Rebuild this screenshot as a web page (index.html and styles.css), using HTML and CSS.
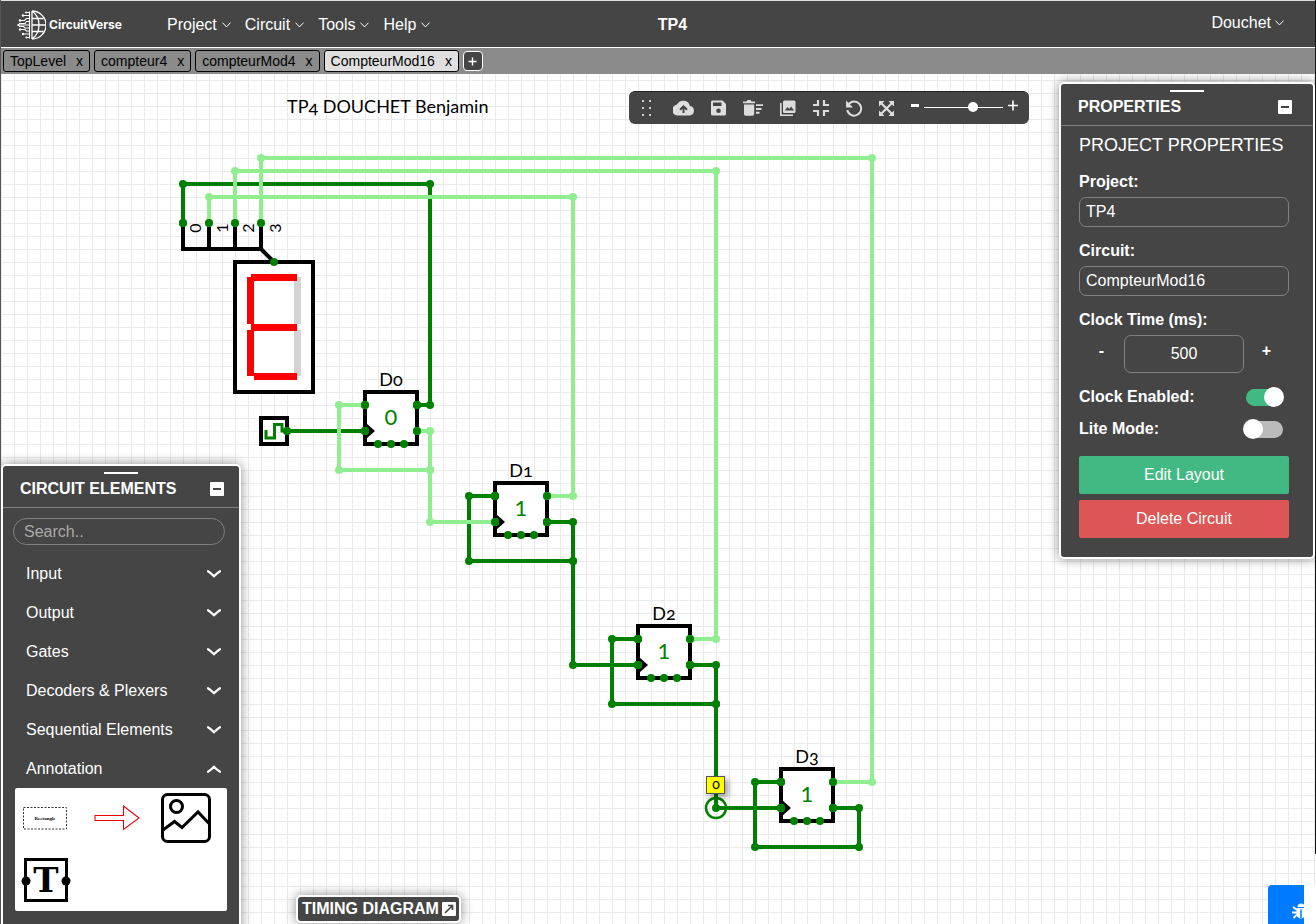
FILE: index.html
```html
<!DOCTYPE html>
<html lang="en">
<head>
<meta charset="utf-8">
<title>CircuitVerse - TP4</title>
<link rel="stylesheet" href="styles.css">
</head>
<body>
<svg class="defs" aria-hidden="true">
  <symbol id="chev-thin" viewBox="0 0 9 6"><path d="M0.5 0.7 4.5 4.9 8.5 0.7" fill="none" stroke="currentColor" stroke-width="1"/></symbol>
  <symbol id="chev" viewBox="0 0 14 8"><path d="M1 1.2Q4 3 7 6.2 10 3 13 1.2" fill="none" stroke="currentColor" stroke-width="2.2" stroke-linecap="round"/></symbol>
</svg>
<div class="app">
  <header class="topbar">
    <div class="topbar-left">
      <a class="brand" href="#">
        <svg width="29" height="30" viewBox="0 0 29 30" fill="none" stroke="#fff" stroke-width="1.3">
          <path d="M15 1v28M15 1a14 14 0 0 1 0 28M15 1q7 5 7 14t-7 14M15 8.500h11.500M15 15h13.500M15 21.500h11.500"/>
          <path d="M12.500 1.500v27M12.500 2.500H9.500M12.500 5.500H7M12.500 8.500h-3l-2 2H3.500M12.500 11.500H9.500l-1.500 2H2M12.500 15H1M12.500 18H8l-1.500-1.500H2M12.500 21H9.500l-1.500-1.500H3M12.500 24H7M12.500 27.500H10" stroke-width="1.1"/>
          <g fill="#fff" stroke="none"><circle cx="9" cy="2.500" r="1"/><circle cx="6" cy="5.500" r="1.200"/><circle cx="3" cy="10.500" r="1.200"/><circle cx="1.500" cy="15" r="1.200"/><circle cx="3" cy="19.500" r="1.200"/><circle cx="6" cy="24" r="1.200"/><circle cx="9.500" cy="27.500" r="1"/></g>
        </svg>
        <span>CircuitVerse</span>
      </a>
      <nav class="menu">
        <button>Project <svg width="9" height="6"><use href="#chev-thin"/></svg></button>
        <button>Circuit <svg width="9" height="6"><use href="#chev-thin"/></svg></button>
        <button>Tools <svg width="9" height="6"><use href="#chev-thin"/></svg></button>
        <button>Help <svg width="9" height="6"><use href="#chev-thin"/></svg></button>
      </nav>
    </div>
    <h1 class="project-name">TP4</h1>
    <button class="user">Douchet <svg width="9" height="6"><use href="#chev-thin"/></svg></button>
  </header>

  <nav class="tabs">
    <div class="tab"><a href="#">TopLevel</a><button>x</button></div>
    <div class="tab"><a href="#">compteur4</a><button>x</button></div>
    <div class="tab"><a href="#">compteurMod4</a><button>x</button></div>
    <div class="tab current"><a href="#">CompteurMod16</a><button>x</button></div>
    <button class="tab-add" aria-label="Add circuit"><svg width="9" height="9" viewBox="0 0 9 9"><path d="M4.500 0.500v8M0.500 4.500h8" stroke="#fff" stroke-width="1.400"/></svg></button>
  </nav>

  <main class="workspace">
    <svg class="canvas">
      <defs>
        <pattern id="grid" width="13" height="13" patternUnits="userSpaceOnUse" x="14" y="80"><path d="M0.500 0v13M0 0.500h13" stroke="#eaeaea" stroke-width="1" fill="none"/></pattern>
        <g id="dff">
          <rect x="0" y="0" width="52" height="52" fill="#fff" stroke="#000" stroke-width="4"/>
          <path d="M1 31 10 39 1 47z" fill="#000"/>
          <g fill="green"><circle cy="13" r="4"/><circle cy="39" r="4"/><circle cx="52" cy="13" r="4"/><circle cx="52" cy="39" r="4"/><circle cx="13" cy="52" r="4"/><circle cx="26" cy="52" r="4"/><circle cx="39" cy="52" r="4"/></g>
        </g>
        <marker id="node-d" markerUnits="userSpaceOnUse" markerWidth="8" markerHeight="8" refX="4" refY="4"><circle cx="4" cy="4" r="4" fill="green"/></marker>
        <marker id="node-l" markerUnits="userSpaceOnUse" markerWidth="8" markerHeight="8" refX="4" refY="4"><circle cx="4" cy="4" r="4" fill="#90ee90"/></marker>
        <filter id="soft" x="-50%" y="-50%" width="220%" height="220%"><feDropShadow dx="3" dy="3" stdDeviation="3" flood-opacity="0.4"/></filter>
      </defs>
      <g transform="translate(0 -74)">
        <rect y="74" width="100%" height="100%" fill="url(#grid)"/>
        <g class="parts">
          <path d="M183 223v26H261V223M209 223v26M235 223v26M261 249l13 13"/>
          <rect x="235" y="262" width="78" height="130" fill="#fff"/>
          <rect x="261" y="418" width="26" height="26" fill="#fff"/>
        </g>
        <g fill="#d3d3d3"><rect x="294" y="277" width="7" height="47"/><rect x="294" y="330" width="7" height="46"/></g>
        <g fill="red"><rect x="251" y="274" width="46" height="7"/><rect x="247" y="277" width="7" height="47"/><rect x="251" y="324" width="46" height="7"/><rect x="247" y="330" width="7" height="46"/><rect x="254" y="373" width="43" height="7"/></g>
        <path d="M266 430v8h8.500v-13.500h7.500v6.500h5" fill="none" stroke="green" stroke-width="3"/>
        <use href="#dff" x="365" y="392"/><use href="#dff" x="495" y="483"/><use href="#dff" x="638" y="626"/><use href="#dff" x="781" y="769"/>
        <g class="wire dark">
          <path d="M183 223V184H430V405H417"/>
          <path d="M287 431H365"/>
          <path d="M495 496H469V561H573"/>
          <path d="M547 522H573V561 665H638"/>
          <path d="M638 639H612V704H716"/>
          <path d="M690 665H716V704 808H781"/>
          <path d="M781 782H755V847H859V808H833"/>
        </g>
        <g class="wire light">
          <path d="M209 223V197H573V496H547"/>
          <path d="M235 223V171H716V639H690"/>
          <path d="M261 223V158H872V782H833"/>
          <path d="M365 405H339V470H430"/>
          <path d="M417 431H430V470 522H495"/>
        </g>
        <g fill="green">
          <circle cx="183" cy="223" r="4"/><circle cx="209" cy="223" r="4"/><circle cx="235" cy="223" r="4"/><circle cx="261" cy="223" r="4"/><circle cx="274" cy="262" r="4"/>
          <circle cx="287" cy="431" r="4"/>
          <circle cx="365" cy="405" r="4"/><circle cx="365" cy="431" r="4"/><circle cx="417" cy="405" r="4"/><circle cx="417" cy="431" r="4"/>
          <circle cx="495" cy="496" r="4"/><circle cx="495" cy="522" r="4"/><circle cx="547" cy="496" r="4"/><circle cx="547" cy="522" r="4"/>
          <circle cx="638" cy="639" r="4"/><circle cx="638" cy="665" r="4"/><circle cx="690" cy="639" r="4"/><circle cx="690" cy="665" r="4"/>
          <circle cx="781" cy="782" r="4"/><circle cx="781" cy="808" r="4"/><circle cx="833" cy="782" r="4"/><circle cx="833" cy="808" r="4"/>
        </g>
        <circle cx="716" cy="808" r="10" fill="none" stroke="green" stroke-width="2.500"/>
        <rect x="706.500" y="776.500" width="18" height="17" fill="#ff0" stroke="#555" filter="url(#soft)"/>
        <text class="flag" x="716" y="789">0</text>
        <g class="pin-no">
          <text transform="translate(201 228) rotate(-90)">0</text>
          <text transform="translate(228 228) rotate(-90)">1</text>
          <text transform="translate(254 228) rotate(-90)">2</text>
          <text transform="translate(281 228) rotate(-90)">3</text>
        </g>
        <text class="note" x="287" y="113">TP4 DOUCHET Benjamin</text>
        <g class="label"><text x="391" y="386">D0</text><text x="521" y="477">D1</text><text x="664" y="620">D2</text><text x="807" y="763">D3</text></g>
        <g class="state"><text x="391" y="425">0</text><text x="521" y="516">1</text><text x="664" y="659">1</text><text x="807" y="802">1</text></g>
      </g>
    </svg>

    <div class="quick">
      <svg width="9" height="18" viewBox="0 0 9 18" fill="#ccc"><path d="M0 1h2v2H0zM7 1h2v2H7zM0 8h2v2H0zM7 8h2v2H7zM0 15h2v2H0zM7 15h2v2H7z"/></svg>
      <button class="q-cloud" aria-label="Save online"><svg width="21" height="16" viewBox="0 0 21 16"><path d="M17 6A7 7 0 0 0 4 4.500 5.500 5.500 0 0 0 5.500 15.500H16.500A4.800 4.800 0 0 0 17 6z" fill="#ddd"/><path d="M10.500 13V7M7 9.800l3.500-3.500L14 9.800" fill="none" stroke="#454545" stroke-width="2"/></svg></button>
      <button aria-label="Save offline"><svg width="15" height="16" viewBox="0 0 15 16"><path fill-rule="evenodd" d="M1.500 0.500h10L15 4v10a1.500 1.500 0 0 1-1.500 1.500h-12A1.500 1.500 0 0 1 0 14V2a1.500 1.500 0 0 1 1.500-1.500zM2 2.500v3.500h8.500V2.500z" fill="#ddd"/><circle cx="7.500" cy="10.800" r="2.300" fill="#454545"/></svg></button>
      <button aria-label="Delete selected"><svg width="20" height="16" viewBox="0 0 20 16" fill="#ddd"><path d="M0 1.500h3.500L4.500 0h3l1 1.500H12v1.700H0zM1 4.500h10.200V14a1.800 1.800 0 0 1-1.800 1.800H2.800A1.800 1.800 0 0 1 1 14z"/><path d="M13 4.200h7v1.900h-7zM13 8h5.500v1.900H13zM13 11.800h3.500v1.900H13z"/></svg></button>
      <button aria-label="Download as image"><svg width="16" height="16" viewBox="0 0 16 16"><path d="M0.800 3v12.200H13" fill="none" stroke="#ddd" stroke-width="1.600"/><rect x="3" y="0.500" width="12.500" height="12.500" rx="1.500" fill="#ddd"/><path d="M4.800 10.500 7.500 7l1.700 2L11 6.500l3.200 4z" fill="#454545"/></svg></button>
      <button aria-label="Fit to screen"><svg width="16" height="16" viewBox="0 0 16 16"><path d="M5 0v5H0M11 0v5h5M5 16v-5H0M11 16v-5h5" fill="none" stroke="#ddd" stroke-width="2.200"/></svg></button>
      <button aria-label="Undo"><svg width="16" height="17" viewBox="0 0 16 17"><path d="M2.500 4.500A7 7 0 1 1 1.300 10" fill="none" stroke="#ddd" stroke-width="2"/><path d="M0 0.500v7h7z" fill="#ddd"/></svg></button>
      <button aria-label="View fullscreen"><svg width="15" height="15" viewBox="0 0 15 15"><path d="M2 2l11 11M13 2 2 13" stroke="#ddd" stroke-width="2.200"/><path d="M0 0h5.500L0 5.500zM15 0H9.500L15 5.500zM15 15H9.500L15 9.500zM0 15h5.500L0 9.500z" fill="#ddd"/></svg></button>
      <div class="zoom">
        <button aria-label="Zoom out"><svg width="8" height="6"><path d="M0 0h8v3H0z" fill="#fff"/></svg></button>
        <input type="range" min="0" max="100" value="64" aria-label="Zoom">
        <button aria-label="Zoom in"><svg width="10" height="14" viewBox="0 0 10 14"><path d="M5 0.500v10M0 5.500h10" stroke="#fff" stroke-width="1.600"/></svg></button>
      </div>
    </div>

    <section class="panel elements">
      <div class="panel-head"><h2>CIRCUIT ELEMENTS</h2><button class="fold" aria-label="Minimize"></button></div>
      <div class="elements-body">
        <input class="search" type="search" placeholder="Search.." aria-label="Search elements">
        <button class="group">Input <svg width="14" height="8"><use href="#chev"/></svg></button>
        <button class="group">Output <svg width="14" height="8"><use href="#chev"/></svg></button>
        <button class="group">Gates <svg width="14" height="8"><use href="#chev"/></svg></button>
        <button class="group">Decoders &amp; Plexers <svg width="14" height="8"><use href="#chev"/></svg></button>
        <button class="group">Sequential Elements <svg width="14" height="8"><use href="#chev"/></svg></button>
        <button class="group open">Annotation <svg width="14" height="8"><use href="#chev"/></svg></button>
        <div class="icons">
          <svg width="45" height="23" viewBox="0 0 45 23"><rect x="0.500" y="0.500" width="43" height="21.500" fill="none" stroke="#333" stroke-dasharray="2 1.500"/><text x="22" y="13" class="mini">Rectangle</text></svg>
          <svg width="46" height="26" viewBox="0 0 46 26"><path d="M1 10.500H29.500V1L45 13 29.500 24.500V15.500H1z" fill="#fff" stroke="#e00" stroke-width="1.100"/></svg>
          <svg width="50" height="50" viewBox="0 0 50 50" fill="none" stroke="#000" stroke-width="3"><rect x="1.500" y="1.500" width="47" height="47" rx="5"/><circle cx="15.500" cy="13.500" r="6"/><path d="M2 37l11.500-8.500 7.500 6L37 19l12 12.500"/></svg>
          <svg width="50" height="44" viewBox="0 0 50 44"><rect x="4.500" y="1.500" width="41" height="41" fill="none" stroke="#000" stroke-width="3"/><circle cx="5" cy="23" r="4.500"/><circle cx="45" cy="23" r="4.500"/><text x="25" y="34" class="big-t">T</text></svg>
        </div>
      </div>
    </section>

    <section class="panel props">
      <div class="panel-head"><h2>PROPERTIES</h2><button class="fold" aria-label="Minimize"></button></div>
      <form class="props-body">
        <h3>PROJECT PROPERTIES</h3>
        <label for="proj">Project:</label>
        <input id="proj" type="text" value="TP4">
        <label for="circ">Circuit:</label>
        <input id="circ" type="text" value="CompteurMod16">
        <label for="clk">Clock Time (ms):</label>
        <div class="stepper"><button type="button">-</button><input id="clk" type="text" value="500"><button type="button">+</button></div>
        <div class="switch-row"><label for="en">Clock Enabled:</label><input id="en" class="switch" type="checkbox" checked></div>
        <div class="switch-row"><label for="lite">Lite Mode:</label><input id="lite" class="switch" type="checkbox"></div>
        <button type="button" class="btn edit">Edit Layout</button>
        <button type="button" class="btn delete">Delete Circuit</button>
      </form>
    </section>

    <button class="panel timing">TIMING DIAGRAM <svg width="14" height="14" viewBox="0 0 14 14"><rect width="14" height="14" rx="1" fill="#fff"/><path d="M3 11l7-7M6 3.500h4.500V8" fill="none" stroke="#454545" stroke-width="1.700"/></svg></button>
    <button class="report" aria-label="Report a bug"><svg width="18" height="16" viewBox="0 0 18 16"><path d="M5.500 4a3.500 3.500 0 0 1 7 0z" fill="#fff"/><path d="M4.500 5H13.500V11a4.500 4.500 0 0 1-9 0z" fill="#fff"/><path d="M9 6.500V15" stroke="#007bff" stroke-width="1.500"/><path d="M1 4l4 3M0 9.500h5M1.500 15l3.500-3.500M17 4l-4 3M18 9.500h-5M16.500 15 13 11.500" stroke="#fff" stroke-width="1.800"/></svg></button>
  </main>
</div>
</body>
</html>
```
FILE: styles.css
```css
* { box-sizing: border-box; }
body { margin: 0; font: 16px/20px "Liberation Sans", Arial, sans-serif; color: #fff; background: #fff; }
h1, h2, h3 { margin: 0; font-size: 16px; }
button { font: inherit; color: inherit; background: none; border: 0; padding: 0; cursor: pointer; }
a { color: inherit; text-decoration: none; }
input { font: inherit; }
svg { flex: none; }
.defs { position: absolute; width: 0; height: 0; }
.app { display: flex; flex-direction: column; height: 100vh; overflow: hidden; position: relative; border-left: 1px solid #555; }
.app::after { content: ""; position: absolute; top: 0; right: 0; bottom: 70px; width: 1px; background: #111; }

.topbar { display: grid; grid-template-columns: 1fr auto 1fr; align-items: center; height: 48px; padding: 2px 32px 0 16px; background: #454545; border-top: 1px solid #dde2e0; border-bottom: 1px solid #fff; }
.topbar-left { display: flex; align-items: center; gap: 45px; }
.brand { display: flex; align-items: center; gap: 3px; font: 700 12px/16px Inter, sans-serif; }
.menu { display: flex; gap: 14px; }
.menu button, .user { display: flex; align-items: center; gap: 5px; }
.project-name { padding-left: 44px; }
.user { justify-self: end; padding-bottom: 4px; gap: 4px; }

.tabs { display: flex; gap: 4px; height: 26px; padding: 2px; background: #8b8b8b; color: #000; font-size: 14px; }
.tab { display: flex; align-items: center; gap: 10px; height: 22px; padding: 0 6px; border: 1px solid #000; border-radius: 3px; }
.tab.current { background: #e0e0e0; }
.tab-add { display: grid; place-items: center; align-self: center; width: 20px; height: 20px; background: #454545; border: 1px solid #fff; border-radius: 4px; }

.workspace { flex: 1; position: relative; min-height: 0; overflow: hidden; }
.canvas { position: absolute; top: 0; bottom: 0; left: -1px; right: 0; width: calc(100% + 1px); height: 100%; font-family: Lato, sans-serif; }
.parts { fill: none; stroke: #000; stroke-width: 4; }
.wire { fill: none; stroke-width: 4; stroke-linejoin: round; }
.dark path { stroke: green; marker: url(#node-d); }
.light path { stroke: #90ee90; marker: url(#node-l); }
.note { font-size: 18px; font-variant-numeric: oldstyle-nums; }
.label { font-size: 18px; text-anchor: middle; font-variant-numeric: oldstyle-nums; }
.state { font-size: 22px; fill: green; text-anchor: middle; }
.pin-no { font-size: 16px; text-anchor: middle; }
.flag { font-size: 14px; text-anchor: middle; font-variant-numeric: oldstyle-nums; }

.quick { position: absolute; top: 17px; right: 287px; display: flex; align-items: center; gap: 17px; width: 400px; height: 33px; padding: 0 11px 0 13px; background: #454545; border-radius: 6px; border-top: 1px solid #222; }
.quick button { display: flex; }
.q-cloud { margin-left: 5px; }
.zoom { display: flex; align-items: center; gap: 5px; flex: 1; padding-bottom: 2px; }
.zoom input { appearance: none; flex: 1; width: 60px; height: 12px; margin: 0; background: linear-gradient(#fff, #fff) center / 100% 1px no-repeat; }
.zoom input::-webkit-slider-thumb { appearance: none; width: 10px; height: 10px; border-radius: 50%; background: #fff; }

.panel { position: absolute; background: #454545; border: 2px solid #fff; border-radius: 5px; box-shadow: 0 0 12px rgba(0, 0, 0, .45); }
.panel-head { position: relative; display: flex; align-items: center; justify-content: space-between; height: 42px; padding: 4px 15px 0 17px; border-bottom: 1px solid #808080; }
.panel-head::before { content: ""; position: absolute; top: 6px; left: calc(50% - 17px); width: 34px; height: 2px; background: #fff; }
.fold { display: grid; place-items: center; width: 14px; height: 14px; background: #fff; border-radius: 1px; }
.fold::before { content: ""; width: 8px; height: 2px; background: #454545; }

.elements { top: 390px; left: 0; width: 240px; bottom: -20px; }
.elements-body { display: flex; flex-direction: column; padding: 10px 12px; }
.search { appearance: none; height: 27px; margin: 0 2px 9px -2px; padding: 0 10px; background: none; border: 1px solid #808080; border-radius: 14px; color: #fff; outline: 0; }
.search::placeholder { color: #a9a9a9; }
.group { display: flex; align-items: center; justify-content: space-between; height: 39px; padding: 0 6px 0 11px; }
.group.open svg { transform: rotate(180deg); }
.icons { display: grid; grid-template-columns: repeat(3, 71px); grid-template-rows: 60px 63px; place-items: center start; padding-left: 6px; background: #fff; border-radius: 2px; }
.icons svg:nth-child(1) { margin-left: 2px; }
.icons svg:nth-child(2) { margin-left: 2px; }
.icons svg:nth-child(3) { margin-left: -2px; }
.mini { font: bold 5px "Liberation Serif", serif; text-anchor: middle; }
.big-t { font: bold 34px "DejaVu Serif", serif; text-anchor: middle; }

.props { top: 8px; right: 1px; width: 256px; }
.props .panel-head { padding-right: 21px; }
.props-body { display: flex; flex-direction: column; padding: 9px 24px 19px 18px; }
.props-body h3 { font-size: 18px; font-weight: 400; white-space: nowrap; margin-bottom: 17px; }
.props-body label { font-weight: 700; }
.props-body input[type="text"] { width: 100%; height: 30px; padding: 0 6px; margin: 5px 0 14px; background: none; border: 1px solid #808080; border-radius: 7px; color: #fff; outline: 0; }
.stepper { display: grid; grid-template-columns: 45px 120px 45px; justify-items: center; }
.stepper button { font-weight: 700; align-self: start; margin-top: 11px; }
.props-body .stepper input { height: 38px; margin: 5px 0 14px; text-align: center; }
.switch-row { display: flex; align-items: center; justify-content: space-between; height: 20px; margin-bottom: 12px; padding-right: 6px; }
.switch { appearance: none; position: relative; width: 37px; height: 17px; margin: 0; border-radius: 9px; background: #bbb; }
.switch::before { content: ""; position: absolute; top: -2px; left: -3px; width: 20px; height: 20px; border-radius: 50%; background: #fff; }
.switch:checked { background: #42b983; }
.switch:checked::before { left: 18px; }
.btn { height: 38px; border-radius: 2px; }
.edit { background: #42b983; margin: 5px 0 6px; }
.delete { background: #dc5656; }

.timing { left: 295px; bottom: 1px; display: flex; align-items: center; gap: 3px; height: 28px; padding: 0 3px 0 4px; font-weight: 700; }
.report { position: absolute; right: 0; bottom: 0; display: flex; width: 48px; height: 39px; padding: 18px 0 0 24px; overflow: hidden; border-right: 12px solid #fff; background: #007bff; border-top-left-radius: 4px; }
```
